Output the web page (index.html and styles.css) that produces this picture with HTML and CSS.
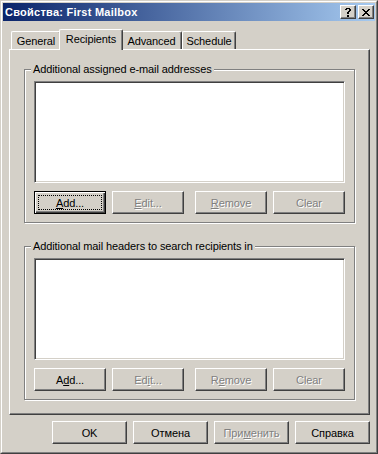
FILE: index.html
```html
<!DOCTYPE html>
<html lang="ru">
<head>
  <meta charset="UTF-8">
  <title>Свойства: First Mailbox</title>
  <link rel="stylesheet" href="styles.css">
</head>
<body>
  <div class="window">
    <div class="frame">
      <div class="titlebar">
        <span class="title">Свойства: First Mailbox</span>
        <div class="caption-buttons">
          <div class="cap-btn">
            <svg width="6" height="9" viewBox="0 0 6 9" shape-rendering="crispEdges">
              <path d="M1 0h4v1H1zM0 1h2v1H0zM4 1h2v2H4zM3 3h2v1H3zM2 4h2v2H2zM2 7h2v2H2z" fill="#000"/>
            </svg>
          </div>
          <div class="cap-btn">
            <svg width="8" height="7" viewBox="0 0 8 7" shape-rendering="crispEdges">
              <path d="M0 0h2v1H0zM6 0h2v1H6zM1 1h2v1H1zM5 1h2v1H5zM2 2h4v1H2zM3 3h2v1H3zM2 4h4v1H2zM1 5h2v1H1zM5 5h2v1H5zM0 6h2v1H0zM6 6h2v1H6z" fill="#000"/>
            </svg>
          </div>
        </div>
      </div>

      <div class="tabs">
        <div class="tab tab-general">General</div>
        <div class="tab tab-recipients active">Recipients</div>
        <div class="tab tab-advanced">Advanced</div>
        <div class="tab tab-schedule">Schedule</div>
      </div>

      <div class="panel">
        <fieldset class="group">
          <legend>Additional assigned e-mail addresses</legend>
          <div class="listbox"></div>
          <div class="btn-row">
            <div class="btn-pair">
              <button class="btn default"><span class="focus"><u>A</u>dd...</span></button>
              <button class="btn" disabled><u>E</u>dit...</button>
            </div>
            <div class="btn-pair">
              <button class="btn" disabled><u>R</u>emove</button>
              <button class="btn" disabled>Clear</button>
            </div>
          </div>
        </fieldset>

        <fieldset class="group second">
          <legend>Additional mail headers to search recipients in</legend>
          <div class="listbox"></div>
          <div class="btn-row">
            <div class="btn-pair">
              <button class="btn">A<u>d</u>d...</button>
              <button class="btn" disabled>Ed<u>i</u>t...</button>
            </div>
            <div class="btn-pair">
              <button class="btn" disabled>R<u>e</u>move</button>
              <button class="btn" disabled>Clear</button>
            </div>
          </div>
        </fieldset>
      </div>

      <div class="dialog-buttons">
        <button class="btn wide">OK</button>
        <button class="btn wide">Отмена</button>
        <button class="btn wide" disabled>При<u>м</u>енить</button>
        <button class="btn wide">Справка</button>
      </div>
    </div>
  </div>
</body>
</html>
```

FILE: styles.css
```css
body {
  margin: 0;
  background-color: #d4d0c8;
  font-family: "Liberation Sans", Arial, sans-serif;
  font-size: 11px;
  letter-spacing: -0.1px;
  color: #000;
}

.window {
  width: 378px;
  height: 454px;
  box-sizing: border-box;
  border: 1px solid;
  border-color: #d4d0c8 #404040 #404040 #d4d0c8;
}

.frame {
  height: 100%;
  box-sizing: border-box;
  border: 1px solid;
  border-color: #fff #808080 #808080 #fff;
  padding: 1px;
  display: flex;
  flex-direction: column;
}

/* title bar */
.titlebar {
  height: 18px;
  flex-shrink: 0;
  background: linear-gradient(to right, #0a246a, #a6caf0);
  display: flex;
  align-items: center;
  justify-content: space-between;
  padding: 0 1px 0 2px;
}

.title {
  color: #fff;
  font-weight: bold;
  letter-spacing: 0.25px;
}

.caption-buttons {
  display: flex;
  gap: 2px;
}

.cap-btn {
  width: 16px;
  height: 14px;
  box-sizing: border-box;
  border: 1px solid;
  border-color: #fff #404040 #404040 #fff;
  box-shadow: inset -1px -1px 0 #808080;
  background-color: #d4d0c8;
  display: flex;
  align-items: center;
  justify-content: center;
}

/* tabs */
.tabs {
  display: flex;
  align-items: flex-end;
  height: 20px;
  margin: 8px 0 0 8px;
  flex-shrink: 0;
}

.tab {
  height: 18px;
  box-sizing: border-box;
  padding: 3px 0 1px;
  line-height: 13px;
  text-align: center;
  border-top: 1px solid #fff;
  border-left: 1px solid #fff;
  border-right: 1px solid #404040;
  border-top-left-radius: 2px;
  border-top-right-radius: 2px;
  box-shadow: inset -1px 0 0 #808080;
  background-color: #d4d0c8;
  white-space: nowrap;
}

.tab-general { width: 50px; }
.tab-recipients { width: 60px; }
.tab-advanced { width: 61px; }
.tab-schedule { width: 54px; }

.tab.active {
  position: relative;
  z-index: 1;
  width: 64px;
  height: 21px;
  margin: 0 -2px -1px;
  padding-bottom: 4px;
}

/* tab page */
.panel {
  height: 366px;
  box-sizing: border-box;
  margin: 0 5px 0 6px;
  border: 1px solid;
  border-color: #fff #404040 #404040 #fff;
  box-shadow: inset -1px -1px 0 #808080;
  padding: 13px 14px 14px;
}

.group {
  margin: 0;
  padding: 5px 9px 8px;
  min-width: 0;
  border: 1px solid #808080;
  box-shadow: 1px 1px 0 #fff, inset 1px 1px 0 #fff;
}

.group.second {
  margin-top: 17px;
}

.group legend {
  padding: 0 2px;
  margin-left: -3px;
  line-height: 13px;
  background-color: #d4d0c8;
}

.listbox {
  height: 102px;
  box-sizing: border-box;
  background-color: #fff;
  border: 1px solid;
  border-color: #808080 #fff #fff #808080;
  box-shadow: inset 1px 1px 0 #404040, inset -1px -1px 0 #d4d0c8;
}

.btn-row {
  display: flex;
  justify-content: space-between;
  margin-top: 8px;
}

.btn-pair {
  display: flex;
  gap: 6px;
}

/* push buttons */
.btn {
  width: 72px;
  height: 23px;
  box-sizing: border-box;
  padding: 0;
  margin: 0;
  font: inherit;
  letter-spacing: inherit;
  color: #000;
  background-color: #d4d0c8;
  border: 1px solid;
  border-color: #fff #404040 #404040 #fff;
  box-shadow: inset -1px -1px 0 #808080, inset 1px 1px 0 #d4d0c8;
  border-radius: 0;
  text-align: center;
}

.btn.wide {
  width: 75px;
}

.btn:disabled {
  color: #808080;
  text-shadow: 1px 1px 0 #fff;
}

.btn.default {
  border-color: #000;
  box-shadow: inset 1px 1px 0 #fff, inset -1px -1px 0 #404040, inset -2px -2px 0 #808080;
  padding: 3px;
}

.focus {
  display: flex;
  align-items: center;
  justify-content: center;
  height: 100%;
  box-sizing: border-box;
  border: 1px dotted #000;
}

.dialog-buttons {
  display: flex;
  justify-content: flex-end;
  gap: 6px;
  margin: 6px 5px 0 0;
}
```
